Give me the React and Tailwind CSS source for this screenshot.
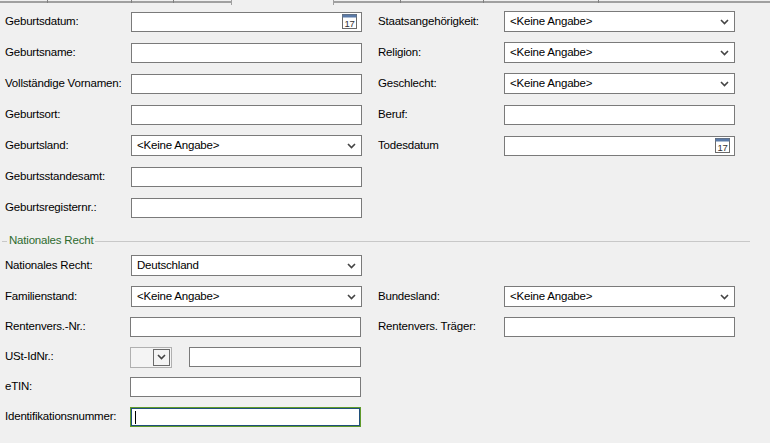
import React from "react";

const Chev = () => (
  <svg width="9" height="6" viewBox="0 0 9 6" className="shrink-0">
    <path d="M1 1 L4.5 4.5 L8 1" stroke="#444" strokeWidth="1.6" fill="none" />
  </svg>
);

const Cal = () => (
  <svg width="15" height="15" viewBox="0 0 15 15" className="shrink-0">
    <rect x="0.5" y="0.5" width="14" height="14" fill="#fff" stroke="#6a6a6a" />
    <rect x="0.5" y="0.5" width="14" height="3" fill="#5a7aa8" />
    <text x="7.5" y="13" fontSize="9.5" textAnchor="middle" fill="#333" fontFamily="Liberation Sans">17</text>
  </svg>
);

const Input = ({ w = "w-[231px]", ml = "ml-0", children, focus }) => (
  <div className={`${w} ${ml} h-[20px] bg-white border ${focus ? "border-[#5f9a2a] ring-1 ring-inset ring-[#1f4f7a]" : "border-[#7a7a7a]"} flex items-center px-[4px] shrink-0`}>
    {children}
  </div>
);

const Select = ({ value, w = "w-[231px]" }) => (
  <div className={`${w} h-[21px] bg-white border border-[#7a7a7a] flex items-center justify-between pl-[5px] pr-[5px] shrink-0`}>
    <span>{value}</span>
    <Chev />
  </div>
);

const Label = ({ children, w = "w-[126px]" }) => <div className={`${w} shrink-0 whitespace-nowrap`}>{children}</div>;

const Row = ({ h = "h-[31px]", children }) => <div className={`${h} flex items-center`}>{children}</div>;

export default function App() {
  const ticks = [47, 131, 173];
  const ticks2 = [400, 483, 598];
  return (
    <div className="w-[770px] h-[443px] bg-[#f0f0f0] text-[11.5px] tracking-[-0.2px] text-black overflow-hidden relative" style={{ fontFamily: "'Liberation Sans', Arial, sans-serif" }}>
      <div className="h-[6px] relative">
        <div className="absolute left-0 top-[1px] w-[232px] h-[2px] bg-[#a0a0a0]" />
        <div className="absolute left-[231px] top-0 w-[1px] h-[5px] bg-[#a0a0a0]" />
        <div className="absolute left-[333px] top-[1px] w-[437px] h-[2px] bg-[#a0a0a0]" />
        <div className="absolute left-[333px] top-0 w-[1px] h-[5px] bg-[#a0a0a0]" />
        {[...ticks, ...ticks2].map((x) => (
          <div key={x} className="absolute top-0 w-[1px] h-[3px] bg-[#808080]" style={{ left: x }} />
        ))}
      </div>
      <div className="flex">
        <div className="w-[378px] pl-[5px] shrink-0">
          <Row><Label>Geburtsdatum:</Label><Input><div className="flex-1" /><Cal /></Input></Row>
          <Row><Label>Geburtsname:</Label><Input /></Row>
          <Row><Label>Vollständige Vornamen:</Label><Input /></Row>
          <Row><Label>Geburtsort:</Label><Input /></Row>
          <Row><Label>Geburtsland:</Label><Select value="<Keine Angabe>" /></Row>
          <Row><Label>Geburtsstandesamt:</Label><Input /></Row>
          <Row><Label>Geburtsregisternr.:</Label><Input /></Row>
        </div>
        <div className="flex-1">
          <Row><Label>Staatsangehörigkeit:</Label><Select value="<Keine Angabe>" /></Row>
          <Row><Label>Religion:</Label><Select value="<Keine Angabe>" /></Row>
          <Row><Label>Geschlecht:</Label><Select value="<Keine Angabe>" /></Row>
          <Row><Label>Beruf:</Label><Input /></Row>
          <Row><Label>Todesdatum</Label><Input><div className="flex-1" /><Cal /></Input></Row>
        </div>
      </div>
      <div className="h-[9px]" />
      <div className="h-[18px] flex items-center pl-[2px] pr-[20px]">
        <div className="w-[5px] h-[1px] bg-[#c8c8c8]" />
        <span className="text-[#2e6b2e] px-[2px]">Nationales Recht</span>
        <div className="flex-1 h-[1px] bg-[#c8c8c8]" />
      </div>
      <div className="flex">
        <div className="w-[378px] pl-[5px] shrink-0">
          <Row><Label>Nationales Recht:</Label><Select value="Deutschland" /></Row>
          <Row><Label>Familienstand:</Label><Select value="<Keine Angabe>" /></Row>
          <Row h="h-[30px]"><Label w="w-[125px]">Rentenvers.-Nr.:</Label><Input /></Row>
          <Row h="h-[30px]">
            <Label w="w-[125px]">USt-IdNr.:</Label>
            <div className="w-[42px] h-[21px] border border-[#b0b0b0] bg-[#f4f4f4] flex items-center justify-end pr-[1px] shrink-0">
              <div className="w-[17px] h-[17px] border border-[#6a6a6a] flex items-center justify-center"><Chev /></div>
            </div>
            <Input w="w-[172px]" ml="ml-[17px]" />
          </Row>
          <Row h="h-[30px]"><Label w="w-[125px]">eTIN:</Label><Input /></Row>
          <Row h="h-[30px]"><Label w="w-[125px]">Identifikationsnummer:</Label><Input focus><div className="w-[1px] h-[13px] bg-black" /></Input></Row>
        </div>
        <div className="flex-1">
          <div className="h-[31px]" />
          <Row><Label>Bundesland:</Label><Select value="<Keine Angabe>" /></Row>
          <Row h="h-[30px]"><Label>Rentenvers. Träger:</Label><Input /></Row>
        </div>
      </div>
    </div>
  );
}
